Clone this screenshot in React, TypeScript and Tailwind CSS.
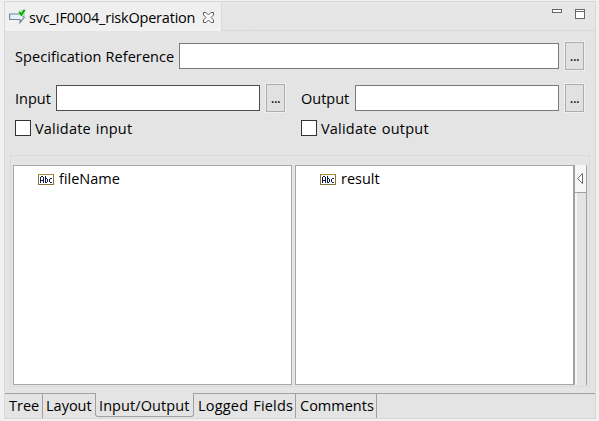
import React from "react";

function Label({ children, className = "" }: { children: React.ReactNode; className?: string }) {
  return <span className={`block shrink-0 whitespace-pre ${className}`}>{children}</span>;
}

function TextField({ className = "border-[#7a7a7a]" }: { className?: string }) {
  return (
    <input
      type="text"
      className={`block h-[26px] shrink-0 border bg-white px-1 outline-none ${className}`}
    />
  );
}

function BrowseButton() {
  return (
    <button
      type="button"
      className="ml-[6px] flex h-7 w-[19px] shrink-0 items-end justify-center border border-[#adadad] bg-[#e1e1e1] pb-[7px] shadow-[0_0_0_1px_#f0f0f0]"
      aria-label="Browse"
    >
      <span className="text-[14px] leading-[13px] tracking-[-0.5px]">...</span>
    </button>
  );
}

function Checkbox({ label }: { label: string }) {
  return (
    <label className="flex h-4 items-center">
      <span className="block size-4 shrink-0 border border-[#333] bg-white" />
      <Label className="ml-1 mt-px tracking-[0.2px] [word-spacing:1px]">{label}</Label>
    </label>
  );
}

function AbcIcon() {
  return (
    <svg width="16" height="11" viewBox="0 0 16 11" shapeRendering="crispEdges" className="shrink-0" fill="none">
      <rect x="0.5" y="0.5" width="15" height="10" fill="#fff" stroke="#85713f" />
      <path d="M0 .5H16" stroke="#b08a3a" />
      <g fill="#0d1a4d">
        <path d="M3 2h2v1H3zM2 3h1v6H2zM5 3h1v6H5zM3 6h2v1H3z" />
        <path d="M7 2h1v7H7zM8 4h1v1H8zM9 5h1v3H9zM8 8h1v1H8z" />
        <path d="M11 5h1v3h-1zM12 4h2v1h-2zM12 8h2v1h-2z" />
      </g>
    </svg>
  );
}

function OperationIcon() {
  return (
    <svg width="17" height="16" viewBox="0 0 17 16" className="shrink-0" fill="none">
      <path d="M.6 5H10.5V3.5L15.3 8.3L11 13.5V10.5H.6Z" fill="#e9f0f6" stroke="#71879b" strokeWidth="1.2" />
      <rect x="10" y="1" width="6" height="6" fill="#b4e8b0" />
      <path d="M10.3 3.2L12.5 5.7L15.6 .8" stroke="#08a80d" strokeWidth="2" />
    </svg>
  );
}

function CloseIcon() {
  return (
    <svg width="11" height="11" viewBox="0 0 11 11" className="shrink-0" fill="none">
      <path d="M.5 .5H3L5.5 3L8 .5H10.5V3L8 5.5L10.5 8V10.5H8L5.5 8L3 10.5H.5V8L3 5.5L.5 3Z" fill="#fff" stroke="#5c5c5c" />
    </svg>
  );
}

function List({ item, className = "" }: { item: string; className?: string }) {
  return (
    <div className={`h-[220px] shrink-0 border border-[#a9a9ac] bg-white ${className}`}>
      <div className="flex h-[26px] items-center pl-6">
        <AbcIcon />
        <Label className="ml-[5px]">{item}</Label>
      </div>
    </div>
  );
}

export default function App() {
  return (
    <div className="h-[421px] w-[599px] overflow-hidden bg-[#f0f0f0] pl-1 pt-px font-['Open_Sans','Noto_Sans',sans-serif] text-[14.5px] leading-5 text-black">
      <div className="flex h-[418px] w-[592px] flex-col border border-[#d9d9d9] bg-[#e4e4e4]">
        <div className="flex h-[29px] shrink-0">
          <div className="flex w-[216px] shrink-0 items-center bg-gradient-to-b from-[#eeeeee] to-[#f2f2f2] pl-[4px]">
            <OperationIcon />
            <Label className="ml-[3px] mt-[3px] w-[167px] tracking-[-0.21px]">svc_IF0004_riskOperation</Label>
            <span className="ml-[7px] mt-px block"><CloseIcon /></span>
          </div>
          <div className="flex grow justify-end border-b border-l border-[#d9d9d9] bg-gradient-to-b from-[#e8e8e8] to-[#e4e4e4]">
            <span className="mr-[13px] mt-[7px] block h-1 w-[10px] border border-[#666] bg-white" />
            <span className="mr-[10px] mt-[7px] block h-[10px] w-[10px] border border-[#666] bg-white">
              <span className="mt-px block h-px bg-[#666]" />
            </span>
          </div>
        </div>

        <div className="h-[124px] shrink-0 pl-[10px] pt-[11px]">
          <div className="flex h-7 items-center">
            <Label className="w-[164px] pt-px tracking-[0.08px]">Specification Reference</Label>
            <TextField className="w-[380px] border-[#7a7a7a]" />
            <BrowseButton />
          </div>
          <div className="mt-[14px] flex h-7 items-center">
            <Label className="w-[41px] pt-px">Input</Label>
            <TextField className="w-[204px] border-[#4d4d4d]" />
            <BrowseButton />
            <Label className="ml-4 w-[54px] pt-px">Output</Label>
            <TextField className="w-[204px] border-[#7a7a7a]" />
            <BrowseButton />
          </div>
          <div className="mt-2 grid grid-cols-[286px_1fr]">
            <Checkbox label="Validate input" />
            <Checkbox label="Validate output" />
          </div>
        </div>

        <div className="ml-[5px] flex h-[232px] w-[580px] shrink-0 border border-[#dadada] pl-[2px] pt-[9px]">
          <List item="fileName" className="w-[279px]" />
          <List item="result" className="ml-[3px] w-[280px] border-r-2 border-r-[#a0a0a3]" />
          <div className="flex h-[220px] w-[12px] shrink-0 flex-col border-r border-[#a0a0a0] bg-[#e3e3e3]">
            <div className="flex h-7 items-center border-b border-[#a0a0a0] bg-[#f7f7f7] pl-[2px]">
              <svg width="7" height="11" viewBox="0 0 7 11" fill="none">
                <path d="M5.5 .5V10.5L.7 5.5Z" fill="#fff" stroke="#666" />
              </svg>
            </div>
            <div className="w-[2px] grow bg-[#f7f7f7]" />
          </div>
        </div>

        <div className="mt-[6px] flex h-[25px] shrink-0">
          <div className="w-[38px] border-r border-t border-[#a0a0a0] pl-1 pt-[2px]"><Label>Tree</Label></div>
          <div className="w-[52px] border-t border-[#a0a0a0] pl-[3px] pt-[2px]"><Label>Layout</Label></div>
          <div className="h-[24px] w-[99px] rounded-b-[3px] border-x border-b border-[#a0a0a0] pl-[3px] pt-[3px]"><Label className="tracking-[0.08px]">Input/Output</Label></div>
          <div className="w-[102px] border-r border-t border-[#a0a0a0] pl-1 pt-[2px]"><Label className="tracking-[0.2px] [word-spacing:1px]">Logged Fields</Label></div>
          <div className="w-[81px] border-r border-t border-[#a0a0a0] pl-1 pt-[2px]"><Label>Comments</Label></div>
          <div className="grow border-t border-[#a0a0a0]" />
        </div>
      </div>
    </div>
  );
}
